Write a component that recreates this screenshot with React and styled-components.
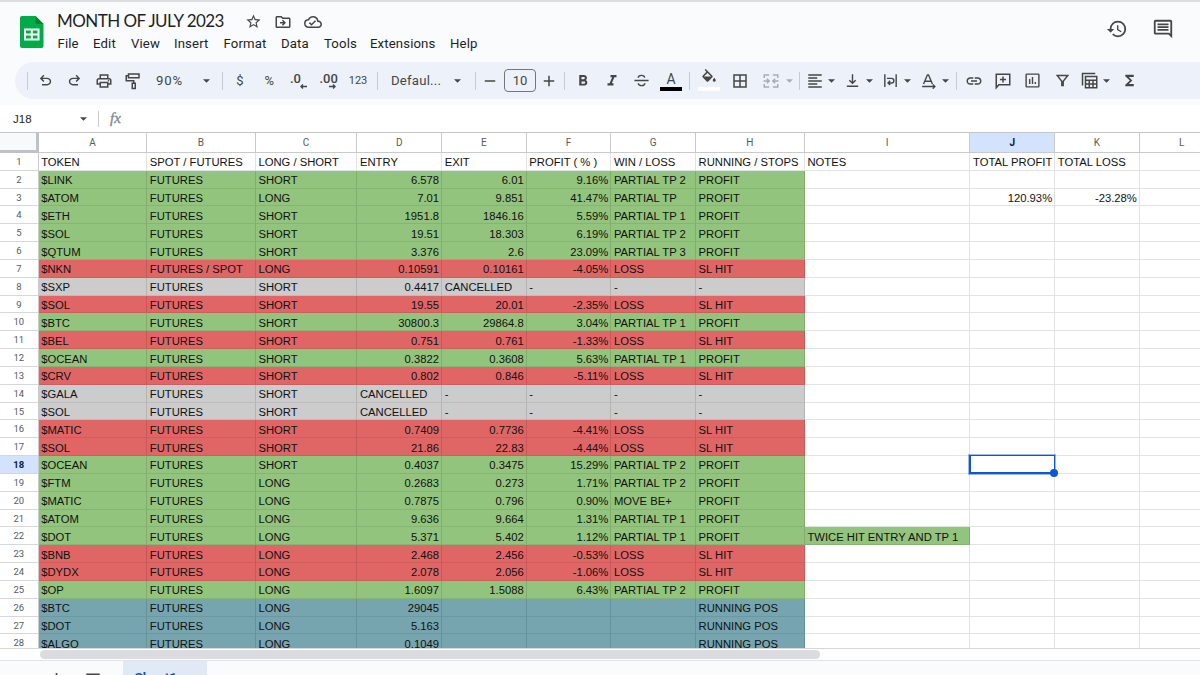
import styled, { createGlobalStyle, css } from "styled-components";
import {
  MdStarBorder,
  MdOutlineDriveFileMove,
  MdOutlineCloudDone,
  MdHistory,
  MdOutlineComment,
  MdOutlinePrint,
  MdFormatBold,
  MdFormatItalic,
  MdBorderAll,
  MdFormatAlignLeft,
  MdLink,
  MdFunctions,
} from "react-icons/md";

const COLUMNS = [
  { name: "A", width: 108.6 },
  { name: "B", width: 108.6 },
  { name: "C", width: 101.6 },
  { name: "D", width: 84.67 },
  { name: "E", width: 84.67 },
  { name: "F", width: 84.67 },
  { name: "G", width: 84.67 },
  { name: "H", width: 108.8 },
  { name: "I", width: 165.7 },
  { name: "J", width: 84.67 },
  { name: "K", width: 84.67 },
  { name: "L", width: 84.67 },
];

const COLORS = {
  green: "#93c47d",
  red: "#e06666",
  grey: "#cccccc",
  blue: "#76a5af",
};

// [color, token, market, side, entry, exit, profit, result, status, notes, total profit, total loss]
const ROWS = [
  [null, "TOKEN", "SPOT / FUTURES", "LONG / SHORT", "ENTRY", "EXIT", "PROFIT ( % )", "WIN / LOSS", "RUNNING / STOPS", "NOTES", "TOTAL PROFIT", "TOTAL LOSS"],
  ["green", "$LINK", "FUTURES", "SHORT", "6.578", "6.01", "9.16%", "PARTIAL TP 2", "PROFIT"],
  ["green", "$ATOM", "FUTURES", "LONG", "7.01", "9.851", "41.47%", "PARTIAL TP", "PROFIT", "", "120.93%", "-23.28%"],
  ["green", "$ETH", "FUTURES", "SHORT", "1951.8", "1846.16", "5.59%", "PARTIAL TP 1", "PROFIT"],
  ["green", "$SOL", "FUTURES", "SHORT", "19.51", "18.303", "6.19%", "PARTIAL TP 2", "PROFIT"],
  ["green", "$QTUM", "FUTURES", "SHORT", "3.376", "2.6", "23.09%", "PARTIAL TP 3", "PROFIT"],
  ["red", "$NKN", "FUTURES / SPOT", "LONG", "0.10591", "0.10161", "-4.05%", "LOSS", "SL HIT"],
  ["grey", "$SXP", "FUTURES", "SHORT", "0.4417", "CANCELLED", "-", "-", "-"],
  ["red", "$SOL", "FUTURES", "SHORT", "19.55", "20.01", "-2.35%", "LOSS", "SL HIT"],
  ["green", "$BTC", "FUTURES", "SHORT", "30800.3", "29864.8", "3.04%", "PARTIAL TP 1", "PROFIT"],
  ["red", "$BEL", "FUTURES", "SHORT", "0.751", "0.761", "-1.33%", "LOSS", "SL HIT"],
  ["green", "$OCEAN", "FUTURES", "SHORT", "0.3822", "0.3608", "5.63%", "PARTIAL TP 1", "PROFIT"],
  ["red", "$CRV", "FUTURES", "SHORT", "0.802", "0.846", "-5.11%", "LOSS", "SL HIT"],
  ["grey", "$GALA", "FUTURES", "SHORT", "CANCELLED", "-", "-", "-", "-"],
  ["grey", "$SOL", "FUTURES", "SHORT", "CANCELLED", "-", "-", "-", "-"],
  ["red", "$MATIC", "FUTURES", "SHORT", "0.7409", "0.7736", "-4.41%", "LOSS", "SL HIT"],
  ["red", "$SOL", "FUTURES", "SHORT", "21.86", "22.83", "-4.44%", "LOSS", "SL HIT"],
  ["green", "$OCEAN", "FUTURES", "SHORT", "0.4037", "0.3475", "15.29%", "PARTIAL TP 2", "PROFIT"],
  ["green", "$FTM", "FUTURES", "LONG", "0.2683", "0.273", "1.71%", "PARTIAL TP 2", "PROFIT"],
  ["green", "$MATIC", "FUTURES", "LONG", "0.7875", "0.796", "0.90%", "MOVE BE+", "PROFIT"],
  ["green", "$ATOM", "FUTURES", "LONG", "9.636", "9.664", "1.31%", "PARTIAL TP 1", "PROFIT"],
  ["green", "$DOT", "FUTURES", "LONG", "5.371", "5.402", "1.12%", "PARTIAL TP 1", "PROFIT", "TWICE HIT ENTRY AND TP 1"],
  ["red", "$BNB", "FUTURES", "LONG", "2.468", "2.456", "-0.53%", "LOSS", "SL HIT"],
  ["red", "$DYDX", "FUTURES", "LONG", "2.078", "2.056", "-1.06%", "LOSS", "SL HIT"],
  ["green", "$OP", "FUTURES", "LONG", "1.6097", "1.5088", "6.43%", "PARTIAL TP 2", "PROFIT"],
  ["blue", "$BTC", "FUTURES", "LONG", "29045", "", "", "", "RUNNING POS"],
  ["blue", "$DOT", "FUTURES", "LONG", "5.163", "", "", "", "RUNNING POS"],
  ["blue", "$ALGO", "FUTURES", "LONG", "0.1049", "", "", "", "RUNNING POS"],
];

const MENUS = [
  ["File", 35.5],
  ["Edit", 38],
  ["View", 43],
  ["Insert", 49.5],
  ["Format", 57.5],
  ["Data", 43],
  ["Tools", 46],
  ["Extensions", 80],
  ["Help", 40],
];

const SELECTED = { row: 18, column: "J" };

const isNumber = (value) => /^-?[\d.]+%?$/.test(value);

const cellColor = (color, column, value) => {
  if (!color) return null;
  if (column < 8) return COLORS[color];
  return column === 8 && value ? COLORS[color] : null;
};

/* ---------- icons ---------- */

const Icon = ({ size = 17, children }) => (
  <svg width={size} height={size} viewBox="0 0 24 24" fill="currentColor">
    {children}
  </svg>
);

const LineIcon = ({ size = 17, children }) => (
  <svg width={size} height={size} viewBox="0 0 24 24" fill="none" stroke="currentColor" strokeWidth="2">
    {children}
  </svg>
);

const UNDO_PATH =
  "M7 19v-2h7.1q1.575 0 2.738-1T18 13.5 16.838 11 14.1 10H7.8l2.6 2.6L9 14 4 9l5-5 1.4 1.4L7.8 8h6.3q2.425 0 4.163 1.575T20 13.5t-1.738 3.925T14.1 19z";

const UndoIcon = () => (
  <Icon>
    <path d={UNDO_PATH} />
  </Icon>
);

const RedoIcon = () => (
  <Icon>
    <path d={UNDO_PATH} transform="translate(24 0) scale(-1 1)" />
  </Icon>
);

const PaintIcon = () => (
  <LineIcon size={18}>
    <path d="M6 2.5h14v5H6zM6 5H3v6.500h10V15M11 15h4v7h-4z" />
  </LineIcon>
);

const StrikeIcon = () => (
  <LineIcon>
    <path d="M2 12h20M16.500 8c-.3-2-2-3.200-4.500-3.200-2.700 0-4.600 1.300-4.600 3.400M7.300 16c.5 2 2.200 3.200 4.800 3.200 2.700 0 4.600-1.300 4.600-3.400" />
  </LineIcon>
);

const FillIcon = () => (
  <Icon size={18}>
    <path d="M16.560 8.940 7.620 0 6.210 1.410l2.380 2.380-5.150 5.150c-.59.59-.59 1.540 0 2.120l5.500 5.500c.29.290.68.440 1.060.44s.77-.15 1.060-.44l5.500-5.500c.59-.58.590-1.530 0-2.120M5.210 10 10 5.210 14.790 10zM19 11.500s-2 2.170-2 3.500c0 1.100.900 2 2 2s2-.9 2-2c0-1.330-2-3.500-2-3.500" />
  </Icon>
);

const MergeIcon = () => (
  <LineIcon size={18}>
    <path d="M9.500 4H3v4M14.500 4H21v4M3 16v4h6.500M21 16v4h-6.500M2 12h7M22 12h-7M6.500 9l3 3-3 3M17.500 9l-3 3 3 3" />
  </LineIcon>
);

const VerticalIcon = () => (
  <LineIcon>
    <path d="M4 20h16M12 3v12.500M7.500 11.500 12 16l4.500-4.500" />
  </LineIcon>
);

const WrapIcon = () => (
  <LineIcon>
    <path d="M4 3v18M20 3v18M7 9h6.500a3.200 3.200 0 0 1 0 6.500H9M11.500 12.500l-3 3 3 3" />
  </LineIcon>
);

const RotateIcon = () => (
  <LineIcon>
    <path d="M5 17 10.500 4h1.500L17.500 17M7 13h8.500M3 20.500h17M18 17.500l3 3-3 3" />
  </LineIcon>
);

const AddCommentIcon = () => (
  <LineIcon size={18}>
    <path d="M3 21V3h18v14H6.500zM12 6v8M8 10h8" />
  </LineIcon>
);

const ChartIcon = () => (
  <LineIcon>
    <rect x="3" y="3" width="18" height="18" rx="1" />
    <path d="M8 17v-7M12 17V7M16 17v-3" />
  </LineIcon>
);

const FilterIcon = () => (
  <LineIcon>
    <path d="M4.500 5h15L13 13v6h-2v-6z" />
  </LineIcon>
);

const TableIcon = () => (
  <LineIcon size={18}>
    <path d="M2 18V2h17M6 6h15v15H6zM6 11h15M6 16h15M11 11v10M16 11v10" />
  </LineIcon>
);

const ArrowLeft = () => (
  <svg width="7" height="5" viewBox="0 0 7 5" fill="none" stroke="currentColor" strokeWidth="1.400">
    <path d="M7 2.500H1M3 .5l-2 2 2 2" />
  </svg>
);

const ArrowRight = () => (
  <svg width="7" height="5" viewBox="0 0 7 5" fill="none" stroke="currentColor" strokeWidth="1.400">
    <path d="M0 2.500h6M4 .5l2 2-2 2" />
  </svg>
);

const SheetsLogo = () => (
  <svg width="24" height="33" viewBox="0 0 24 33">
    <path d="M2 0h13.500L23.500 8v22a2 2 0 0 1-2 2H2a2 2 0 0 1-2-2V2a2 2 0 0 1 2-2z" fill="#00ac47" />
    <path d="M15.500 0 23.500 8h-6a2 2 0 0 1-2-2z" fill="#00832d" />
    <path d="M4 12.500h15.500v12H4zM6 14.500v3h4.800v-3zM12.800 14.500v3h4.700v-3zM6 19.500v3h4.800v-3zM12.800 19.500v3h4.700v-3z" fill="#fff" fillRule="evenodd" />
  </svg>
);

const Drop = ({ muted, w = 10 }) => (
  <Caret $w={w} $muted={muted}>
    <svg width="7" height="4" viewBox="0 0 8 4">
      <path d="M0 0h8L4 4z" fill="currentColor" />
    </svg>
  </Caret>
);

/* ---------- page ---------- */

const Header = () => (
  <TopBar>
    <LogoBox>
      <SheetsLogo />
    </LogoBox>
    <TitleBox>
      <TitleRow>
        <Title>MONTH OF JULY 2023</Title>
        <TitleIcon>
          <MdStarBorder size={17} />
        </TitleIcon>
        <TitleIcon>
          <MdOutlineDriveFileMove size={18} />
        </TitleIcon>
        <TitleIcon>
          <MdOutlineCloudDone size={18} />
        </TitleIcon>
      </TitleRow>
      <MenuRow>
        {MENUS.map(([label, width]) => (
          <MenuItem key={label} $w={width}>
            {label}
          </MenuItem>
        ))}
      </MenuRow>
    </TitleBox>
    <HeaderActions>
      <MdHistory size={22} />
      <MdOutlineComment size={22} />
    </HeaderActions>
  </TopBar>
);

const Toolbar = () => (
  <ToolbarBox>
    <Divider $ml={11.5} />
    <Tool $ml={3.5}><UndoIcon /></Tool>
    <Tool><RedoIcon /></Tool>
    <Tool><MdOutlinePrint size={18} /></Tool>
    <Tool $w={29.5}><PaintIcon /></Tool>
    <Label $ml={8.5} $w={43}>90%</Label>
    <Drop w={14} />
    <Divider $ml={9} />
    <TextTool $ml={2.5}>$</TextTool>
    <TextTool $w={29.5}>%</TextTool>
    <DecimalTool $w={29.5}>
      .0
      <DecimalArrow><ArrowLeft /></DecimalArrow>
    </DecimalTool>
    <DecimalTool $w={29.5}>
      .00
      <DecimalArrow><ArrowRight /></DecimalArrow>
    </DecimalTool>
    <TextTool $w={30} $size={11}>123</TextTool>
    <Divider $ml={4} />
    <Label $ml={13} $w={59}>Defaul...</Label>
    <Drop w={14} />
    <Divider $ml={11} />
    <Tool $w={28}><LineIcon size={18}><path d="M5 12h14" /></LineIcon></Tool>
    <SizeBox>10</SizeBox>
    <Tool $w={26}><LineIcon size={18}><path d="M5 12h14M12 5v14" /></LineIcon></Tool>
    <Divider $ml={2} />
    <Tool $ml={3}><MdFormatBold size={18} /></Tool>
    <Tool><MdFormatItalic size={18} /></Tool>
    <Tool $w={30}><StrikeIcon /></Tool>
    <ColorTool $w={30}>
      A
      <ColorBar $color="#000" />
    </ColorTool>
    <Divider $ml={3} />
    <ColorTool $ml={4} $w={30}>
      <FillIcon />
      <ColorBar $color="#fff" />
    </ColorTool>
    <Tool $w={31.5}><MdBorderAll size={18} /></Tool>
    <Tool $ml={2.5} $w={25} $muted><MergeIcon /></Tool>
    <Drop w={12} muted />
    <Divider $ml={4} />
    <Tool $ml={3} $w={23.5}><MdFormatAlignLeft size={18} /></Tool>
    <Drop />
    <Tool $ml={4.5} $w={23.5}><VerticalIcon /></Tool>
    <Drop />
    <Tool $ml={4.5} $w={23.5}><WrapIcon /></Tool>
    <Drop />
    <Tool $ml={4.5} $w={23}><RotateIcon /></Tool>
    <Drop />
    <Divider $ml={5.5} />
    <Tool $ml={3}><MdLink size={18} /></Tool>
    <Tool $w={29.5}><AddCommentIcon /></Tool>
    <Tool $w={29.5}><ChartIcon /></Tool>
    <Tool $w={29.5}><FilterIcon /></Tool>
    <Tool $ml={1} $w={23.5}><TableIcon /></Tool>
    <Drop />
    <Tool $ml={3.5}><MdFunctions size={17} /></Tool>
  </ToolbarBox>
);

const Sheet = () => (
  <SheetBox>
    <SheetRow $h={20}>
      <Corner />
      {COLUMNS.map(({ name, width }) => (
        <ColumnHead key={name} $w={width} $active={name === SELECTED.column}>
          {name}
        </ColumnHead>
      ))}
    </SheetRow>
    {ROWS.map(([color, ...cells], i) => (
      <SheetRow key={i} $h={17.83}>
        <RowHead $active={i + 1 === SELECTED.row}>{i + 1}</RowHead>
        {COLUMNS.map(({ name, width }, c) => {
          const value = cells[c] || "";
          const selected = i + 1 === SELECTED.row && name === SELECTED.column;
          return (
            <Cell key={name} $w={width} $color={cellColor(color, c, value)} $right={isNumber(value)}>
              {value}
              {selected && (
                <Selection>
                  <Handle />
                </Selection>
              )}
            </Cell>
          );
        })}
      </SheetRow>
    ))}
  </SheetBox>
);

const App = () => (
  <Page>
    <GlobalStyle />
    <Header />
    <Toolbar />
    <FormulaBar>
      <CellName>J18</CellName>
      <Drop w={14} />
      <Divider $ml={8} $h={16} />
      <Fx>fx</Fx>
    </FormulaBar>
    <Sheet />
    <ScrollTrack>
      <ScrollThumb />
    </ScrollTrack>
    <TabBar>
      <TabIcon $ml={47}>
        <LineIcon size={19}><path d="M12 5v14M5 12h14" /></LineIcon>
      </TabIcon>
      <TabIcon $ml={18}>
        <LineIcon size={18}><path d="M3 7h18M3 12h18M3 17h18" /></LineIcon>
      </TabIcon>
      <SheetTab>
        Sheet1
        <Drop w={14} />
      </SheetTab>
    </TabBar>
  </Page>
);

const GlobalStyle = createGlobalStyle`
  * {
    box-sizing: border-box;
  }
  body {
    margin: 0;
    overflow: hidden;
  }
  svg {
    display: block;
    flex: none;
  }
`;

const Page = styled.div`
  display: flex;
  flex-direction: column;
  width: 1200px;
  height: 675px;
  overflow: hidden;
  background: #f9fbfd;
  color: #444746;
  font-family: Roboto, "Liberation Sans", sans-serif;
`;

const TopBar = styled.header`
  display: flex;
  flex: none;
  height: 62px;
  border-top: 2px solid #dcdddf;
`;

const LogoBox = styled.div`
  padding: 14px 0 0 20px;
  width: 57px;
`;

const TitleBox = styled.div`
  flex: 1;
  padding-top: 9px;
`;

const TitleRow = styled.div`
  display: flex;
  align-items: center;
  height: 21px;
`;

const Title = styled.h1`
  margin: -2px 0 0;
  width: 181px;
  white-space: nowrap;
  font: 400 17px/21px Lato, sans-serif;
  letter-spacing: -0.56px;
  color: #1f1f1f;
`;

const TitleIcon = styled.span`
  display: flex;
  justify-content: center;
  width: 30px;
`;

const MenuRow = styled.nav`
  display: flex;
  padding-top: 3px;
`;

const MenuItem = styled.span`
  width: ${({ $w }) => $w}px;
  padding-left: 0.5px;
  font-size: 13.2px;
  line-height: 18px;
  letter-spacing: 0.12px;
  color: #1f1f1f;
`;

const HeaderActions = styled.div`
  display: flex;
  gap: 24px;
  padding: 16px 26px 0 0;
`;

const ToolbarBox = styled.div`
  display: flex;
  flex: none;
  align-items: center;
  height: 37px;
  margin-left: 15px;
  border-radius: 19px 0 0 19px;
  background: #edf2fa;
`;

const slot = css`
  display: flex;
  flex: none;
  align-items: center;
  justify-content: center;
  width: ${({ $w = 29 }) => $w}px;
  margin-left: ${({ $ml = 0 }) => $ml}px;
`;

const Tool = styled.span`
  ${slot}
  color: ${({ $muted }) => ($muted ? "#a9adb3" : "#444746")};
`;

const TextTool = styled.span`
  ${slot}
  font-size: ${({ $size = 13 }) => $size}px;
`;

const DecimalTool = styled.span`
  ${slot}
  flex-direction: column;
  align-items: flex-start;
  padding-left: 6px;
  font-size: 13px;
  font-weight: 500;
  line-height: 12px;
`;

const DecimalArrow = styled.span`
  align-self: flex-end;
  margin: -1px 7px 0 0;
`;

const Label = styled.span`
  ${slot}
  justify-content: flex-start;
  font-size: 13.2px;
  letter-spacing: ${({ children }) => (children === "90%" ? 0.8 : 0.2)}px;
`;

const Caret = styled.span`
  display: flex;
  flex: none;
  justify-content: center;
  width: ${({ $w }) => $w}px;
  color: ${({ $muted }) => ($muted ? "#a9adb3" : "#444746")};
`;

const Divider = styled.span`
  flex: none;
  width: 1px;
  height: ${({ $h = 18 }) => $h}px;
  margin-left: ${({ $ml }) => $ml}px;
  background: #c7cbd1;
`;

const SizeBox = styled.span`
  display: flex;
  flex: none;
  align-items: center;
  justify-content: center;
  width: 32px;
  height: 23px;
  border: 1px solid #747775;
  border-radius: 4px;
  font-size: 13px;
`;

const ColorTool = styled.span`
  ${slot}
  flex-direction: column;
  justify-content: flex-end;
  height: 21px;
  font-size: 14px;
  line-height: 16px;
`;

const ColorBar = styled.span`
  flex: none;
  width: 22px;
  height: 4px;
  background: ${({ $color }) => $color};
`;

const FormulaBar = styled.div`
  display: flex;
  flex: none;
  align-items: center;
  height: 27px;
  margin-top: 6px;
  padding-left: 13px;
  background: #fff;
`;

const CellName = styled.span`
  width: 63px;
  font: 11.5px "Liberation Sans", Arial, sans-serif;
  color: #1f1f1f;
`;

const Fx = styled.span`
  margin-left: 11px;
  font: italic 15px "Liberation Serif", serif;
  -webkit-text-stroke: 0.3px #80868b;
  color: #80868b;
`;

const SheetBox = styled.main`
  flex: none;
  height: 517px;
  overflow: hidden;
  border-top: 1px solid #c4c7c5;
  border-bottom: 1px solid #d5d7da;
  background: #fff;
`;

const SheetRow = styled.div`
  display: flex;
  height: ${({ $h }) => $h}px;
`;

const Corner = styled.div`
  flex: none;
  width: 38.6px;
  border-right: 3px solid #bfc1c4;
  border-bottom: 3px solid #bfc1c4;
  background: #f8f9fa;
`;

const ColumnHead = styled.div`
  flex: none;
  width: ${({ $w }) => $w}px;
  border-right: 1px solid #c8cacc;
  border-bottom: 1px solid #c8cacc;
  background: ${({ $active }) => ($active ? "#d3e3fd" : "#fff")};
  font-size: 10px;
  font-weight: ${({ $active }) => ($active ? 700 : 400)};
  line-height: 19px;
  text-align: center;
  color: ${({ $active }) => ($active ? "#041e49" : "#575b5f")};
`;

const RowHead = styled.div`
  flex: none;
  width: 38.6px;
  border-right: 1px solid #c8cacc;
  border-bottom: 1px solid #d5d7d9;
  background: ${({ $active }) => ($active ? "#d3e3fd" : "#fff")};
  font-size: 9.5px;
  font-weight: ${({ $active }) => ($active ? 700 : 400)};
  line-height: 18px;
  text-align: center;
  color: ${({ $active }) => ($active ? "#041e49" : "#575b5f")};
`;

const Cell = styled.div`
  position: relative;
  flex: none;
  width: ${({ $w }) => $w}px;
  padding: 0.4px 2px 0 2.6px;
  border-right: 1px solid rgba(0, 0, 0, 0.11);
  border-bottom: 1px solid rgba(0, 0, 0, ${({ $color }) => ($color ? 0.08 : 0.11)});
  background: ${({ $color }) => $color || "#fff"};
  font: 11.26px/18px "Liberation Sans", Arial, sans-serif;
  text-align: ${({ $right }) => ($right ? "right" : "left")};
  white-space: nowrap;
  color: #111;
`;

const Selection = styled.div`
  position: absolute;
  z-index: 1;
  inset: -1px -1px -1px -1px;
  border: 1.5px solid #1155cc;
  border-width: 1px 1px 2px 2px;
  outline: 0.5px solid rgba(17, 85, 204, 0.4);
`;

const Handle = styled.div`
  position: absolute;
  right: -4px;
  bottom: -5px;
  width: 8px;
  height: 8px;
  border-radius: 50%;
  background: #0b57d0;
`;

const ScrollTrack = styled.div`
  flex: none;
  height: 12px;
  padding: 1px 0 0 39.5px;
  border-bottom: 1px solid #e1e3e6;
  background: #fff;
`;

const ScrollThumb = styled.div`
  width: 780px;
  height: 9px;
  border-radius: 5px;
  background: #dadce0;
`;

const TabBar = styled.footer`
  display: flex;
  flex: none;
  height: 34px;
`;

const TabIcon = styled.span`
  padding-top: 8px;
  margin-left: ${({ $ml }) => $ml}px;
`;

const SheetTab = styled.div`
  display: flex;
  align-items: center;
  gap: 8px;
  width: 84px;
  height: 33px;
  margin-left: 21px;
  padding-left: 11.5px;
  background: #e1e9f7;
  font-size: 13.4px;
  font-weight: 700;
  color: #0b57d0;
`;

export default App;
